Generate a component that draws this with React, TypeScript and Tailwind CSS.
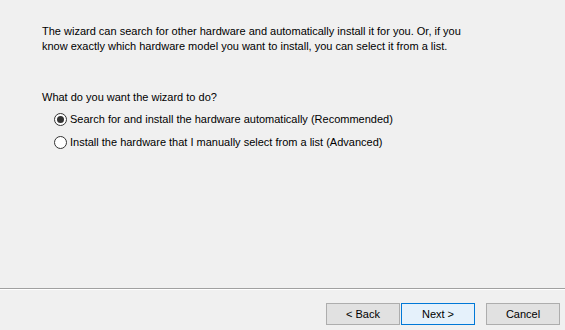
export default function App() {
  return (
    <div className="w-[565px] h-[330px] bg-[#f0f0f0] flex flex-col text-[11px] text-black font-['Liberation_Sans',Arial,sans-serif] leading-[15px]">
      <div className="flex-1 pl-[42px] pt-[24px]">
        <p>
          The wizard can search for other hardware and automatically install it for you. Or, if you
          <br />
          know exactly which hardware model you want to install, you can select it from a list.
        </p>
        <p className="mt-[36px]">What do you want the wizard to do?</p>
        <div className="mt-[7px] pl-[12px] flex flex-col gap-[8px]">
          <label className="flex items-center gap-[3px]">
            <span className="w-[13px] h-[13px] rounded-full border border-[#333] bg-white flex items-center justify-center">
              <span className="w-[7px] h-[7px] rounded-full bg-[#333]" />
            </span>
            Search for and install the hardware automatically (Recommended)
          </label>
          <label className="flex items-center gap-[3px]">
            <span className="w-[13px] h-[13px] rounded-full border border-[#333] bg-white" />
            Install the hardware that I manually select from a list (Advanced)
          </label>
        </div>
      </div>
      <div className="h-px bg-[#a0a0a0]" />
      <div className="h-px bg-white" />
      <div className="h-[40px] flex justify-end items-start pt-[13px] pr-[5px]">
        <button className="w-[74px] h-[22px] bg-[#e1e1e1] border border-[#adadad]">&lt; Back</button>
        <button className="ml-[1px] w-[74px] h-[22px] bg-[#e5f1fb] border border-[#0078d7]">Next &gt;</button>
        <button className="ml-[11px] w-[74px] h-[22px] bg-[#e1e1e1] border border-[#adadad]">Cancel</button>
      </div>
    </div>
  );
}
